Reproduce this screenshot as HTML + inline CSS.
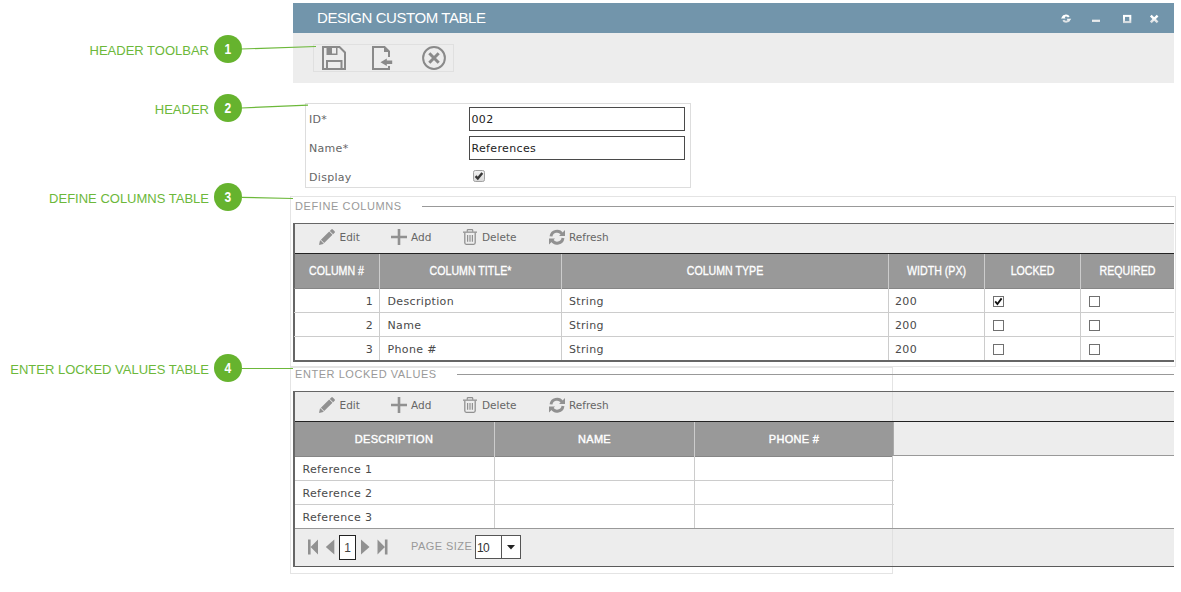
<!DOCTYPE html>
<html><head><meta charset="utf-8"><title>Design Custom Table</title>
<style>
html,body{margin:0;padding:0;background:#fff;}
body{width:1181px;height:592px;position:relative;overflow:hidden;font-family:"Liberation Sans","DejaVu Sans",sans-serif;}
.abs{position:absolute;}
.t{position:absolute;white-space:nowrap;line-height:1;}
/* annotations */
.lbl{color:#6cb83a;font-size:13px;right:972px;text-align:right;}
.dot span{display:inline-block;transform:scaleX(.86);font-size:14px;}
.dot{width:28px;height:28px;border-radius:14px;background:#66b32e;color:#fff;font-weight:bold;font-size:13px;text-align:center;line-height:28px;left:214px;}
/* window */
#title{left:293px;top:3px;width:881px;height:30px;background:#7295ab;}
#tbar{left:293px;top:33px;width:881px;height:50px;background:#ededed;}
#tbox{left:313px;top:44px;width:141px;height:28px;border:1px solid #e0e0e0;box-sizing:border-box;}
.bt{font-family:"DejaVu Sans","Liberation Sans",sans-serif;font-size:11px;letter-spacing:.35px;color:#4a4a4a;margin-top:1px;}
.fl{font-family:"DejaVu Sans","Liberation Sans",sans-serif;font-size:11px;letter-spacing:.3px;color:#666;margin-top:1px;}
.inp{border:1px solid #4a4a4a;box-sizing:border-box;background:#fff;}
.fs{border:1px solid #e4e4e4;box-sizing:border-box;}
.leg{font-size:11px;color:#999;letter-spacing:.6px;}
.hl{height:1px;background:#999;}
.hd{color:#fff;font-weight:normal;font-size:12px;text-align:center;transform:scaleX(.885);-webkit-text-stroke:.32px #fff;}
.hd2{color:#fff;font-weight:normal;font-size:11px;letter-spacing:.3px;text-align:center;-webkit-text-stroke:.4px #fff;margin-top:.75px;}
.cb{width:11px;height:11px;border:1px solid #707070;box-sizing:border-box;background:#fff;}
.tbt{font-family:"DejaVu Sans","Liberation Sans",sans-serif;font-size:10.5px;color:#666;}
.ln{background:#ccc;}
.ic{color:#919191;fill:#919191;}
</style></head><body>

<!-- annotations -->
<div class="t lbl" style="top:43.500px;">HEADER TOOLBAR</div>
<div class="t lbl" style="top:102.500px;">HEADER</div>
<div class="t lbl" style="top:191.500px;">DEFINE COLUMNS TABLE</div>
<div class="t lbl" style="top:362.500px;">ENTER LOCKED VALUES TABLE</div>
<div class="abs dot" style="top:35px;"><span>1</span></div>
<div class="abs dot" style="top:94px;"><span>2</span></div>
<div class="abs dot" style="top:183px;"><span>3</span></div>
<div class="abs dot" style="top:354px;"><span>4</span></div>

<!-- window -->
<div class="abs" id="title"></div>
<div class="t" style="left:317px;top:9.500px;font-size:15px;letter-spacing:-.43px;color:#fff;">DESIGN CUSTOM TABLE</div>
<div class="abs" id="tbar"></div>
<div class="abs" id="tbox"></div>

<!-- title icons -->
<svg class="abs" style="left:1056px;top:10px;" width="110" height="18" viewBox="0 0 110 18">
 <defs><linearGradient id="tg" x1="0" y1="5" x2="0" y2="13" gradientUnits="userSpaceOnUse"><stop offset=".4" stop-color="#fff"/><stop offset="1" stop-color="#d0d6da"/></linearGradient></defs>
 <g fill="none" stroke="url(#tg)" stroke-width="2">
  <path d="M7.200 7.600a3.100 3.100 0 0 1 5.600-.6" />
  <path d="M12.900 9.700a3.100 3.100 0 0 1-5.600 .6" />
 </g>
 <path d="M5 8.600h4.600l-2.300-3.600z M15.200 8.700h-4.600l2.300 3.600z" fill="url(#tg)"/>
 <rect x="36" y="9.700" width="8" height="2.300" fill="url(#tg)"/>
 <rect x="68" y="5.900" width="6.300" height="6.200" fill="none" stroke="url(#tg)" stroke-width="2"/>
 <path d="M94.800 5.600l6.800 6.800M101.600 5.600l-6.800 6.800" stroke="url(#tg)" stroke-width="2.400" fill="none"/>
</svg>

<!-- header toolbar icons -->
<svg class="abs" style="left:322px;top:46px;" width="24" height="24" viewBox="0 0 24 24">
 <path d="M1 1h16.5l5.5 5.5v16.500h-22z" fill="none" stroke="#8a8a8a" stroke-width="2" stroke-linejoin="miter"/>
 <path d="M4.500 1h11v8h-11z" fill="#8a8a8a"/>
 <rect x="10" y="2" width="4" height="5.500" fill="#ededed"/>
 <path d="M5 23v-8h14.500v8" fill="none" stroke="#8a8a8a" stroke-width="2"/>
</svg>
<svg class="abs" style="left:372px;top:46px;" width="22" height="24" viewBox="0 0 22 24">
 <path d="M17 11v-5.500l-4.500-4.500h-11.500v22h16v-3" fill="none" stroke="#8a8a8a" stroke-width="2"/>
 <path d="M12 1v5h5z" fill="#8a8a8a"/>
 <path d="M8.500 16.200l6.300-3.600v1.900h5.400v3.500h-5.400v1.900z" fill="#8a8a8a"/>
</svg>
<svg class="abs" style="left:422px;top:46px;" width="24" height="24" viewBox="0 0 24 24">
 <circle cx="12" cy="12" r="10.900" fill="none" stroke="#8a8a8a" stroke-width="2"/>
 <path d="M7.300 7.300l9.400 9.400M16.700 7.300l-9.400 9.400" stroke="#8a8a8a" stroke-width="3" fill="none"/>
</svg>

<!-- header form -->
<div class="abs" style="left:305px;top:103px;width:386px;height:85px;border:1px solid #ddd;box-sizing:border-box;"></div>
<div class="t fl" style="left:309px;top:113px;">ID*</div>
<div class="t fl" style="left:309px;top:142px;">Name*</div>
<div class="t fl" style="left:309px;top:171px;">Display</div>
<div class="abs inp" style="left:469px;top:107px;width:216px;height:24px;"></div>
<div class="abs inp" style="left:469px;top:136px;width:216px;height:24px;"></div>
<div class="t bt" style="left:471.500px;top:113px;color:#222;">002</div>
<div class="t bt" style="left:471.500px;top:142px;color:#222;">References</div>
<svg class="abs" style="left:473px;top:170px;" width="12" height="12" viewBox="0 0 12 12">
 <defs><linearGradient id="cg" x1="0" y1="0" x2="0" y2="1"><stop offset="0" stop-color="#f4f4f4"/><stop offset="1" stop-color="#d8d8d8"/></linearGradient></defs>
 <rect x=".5" y=".5" width="11" height="11" rx="1.800" fill="url(#cg)" stroke="#a2a2a2"/>
 <path d="M2.600 6.100l2.200 2.400l4.500-5.600" fill="none" stroke="#383838" stroke-width="2.400"/>
</svg>

<!-- fieldset 1 -->
<div class="abs fs" style="left:290px;top:196px;width:886px;height:171px;"></div>
<div class="abs" style="left:293px;top:199px;width:120px;height:15px;background:#fff;"></div>
<div class="t leg" style="left:295px;top:201px;">DEFINE COLUMNS</div>
<div class="abs hl" style="left:422px;top:206px;width:752px;"></div>

<!-- grid 1 -->
<div class="abs" style="left:293px;top:223px;width:881px;height:138px;background:#fff;"></div>
<div class="abs" style="left:293px;top:224px;width:881px;height:29px;background:#ededed;"></div>
<div class="abs" style="left:293px;top:223px;width:881px;height:1px;background:#666;"></div>
<div class="abs" style="left:293px;top:252.500px;width:881px;height:1.500px;background:#222;"></div>
<div class="abs" style="left:293px;top:254px;width:881px;height:34px;background:#999;"></div>
<div class="abs" style="left:293px;top:223px;width:1.500px;height:138px;background:#666;"></div>
<div class="abs" style="left:293px;top:360px;width:881px;height:1.500px;background:#666;"></div>




<!-- grid 1 header cells -->
<div class="abs" style="left:379px;top:254px;width:1px;height:34px;background:#ccc;"></div>
<div class="abs" style="left:561px;top:254px;width:1px;height:34px;background:#ccc;"></div>
<div class="abs" style="left:888px;top:254px;width:1px;height:34px;background:#ccc;"></div>
<div class="abs" style="left:984px;top:254px;width:1px;height:34px;background:#ccc;"></div>
<div class="abs" style="left:1080px;top:254px;width:1px;height:34px;background:#ccc;"></div>
<div class="t hd" style="left:294px;width:85px;top:265px;">COLUMN #</div>
<div class="t hd" style="left:380px;width:181px;top:265px;">COLUMN TITLE*</div>
<div class="t hd" style="left:562px;width:326px;top:265px;">COLUMN TYPE</div>
<div class="t hd" style="left:889px;width:95px;top:265px;">WIDTH (PX)</div>
<div class="t hd" style="left:985px;width:95px;top:265px;">LOCKED</div>
<div class="t hd" style="left:1081px;width:93px;top:265px;">REQUIRED</div>

<!-- grid 1 rows -->
<div class="abs" style="left:294px;top:288px;width:880px;height:1px;background:#868686;"></div>
<div class="abs ln" style="left:294px;top:312px;width:880px;height:1px;"></div>
<div class="abs ln" style="left:294px;top:336px;width:880px;height:1px;"></div>
<div class="abs ln" style="left:379px;top:288px;width:1px;height:72px;"></div>
<div class="abs ln" style="left:561px;top:288px;width:1px;height:72px;"></div>
<div class="abs ln" style="left:888px;top:288px;width:1px;height:72px;"></div>
<div class="abs ln" style="left:984px;top:288px;width:1px;height:72px;"></div>
<div class="abs ln" style="left:1080px;top:288px;width:1px;height:72px;"></div>

<div class="t bt" style="left:294px;width:79px;text-align:right;top:295px;">1</div>
<div class="t bt" style="left:294px;width:79px;text-align:right;top:319px;">2</div>
<div class="t bt" style="left:294px;width:79px;text-align:right;top:343px;">3</div>
<div class="t bt" style="left:387.500px;top:295px;">Description</div>
<div class="t bt" style="left:387.500px;top:319px;">Name</div>
<div class="t bt" style="left:387.500px;top:343px;">Phone #</div>
<div class="t bt" style="left:569px;top:295px;">String</div>
<div class="t bt" style="left:569px;top:319px;">String</div>
<div class="t bt" style="left:569px;top:343px;">String</div>
<div class="t bt" style="left:895px;top:295px;">200</div>
<div class="t bt" style="left:895px;top:319px;">200</div>
<div class="t bt" style="left:895px;top:343px;">200</div>
<div class="abs cb" style="left:993px;top:296px;"></div>
<svg class="abs" style="left:993px;top:296px;" width="11" height="11" viewBox="0 0 11 11"><path d="M2.200 5.400l2.200 2.600l4.200-5.600" fill="none" stroke="#111" stroke-width="1.800"/></svg>
<div class="abs cb" style="left:993px;top:320px;"></div>
<div class="abs cb" style="left:993px;top:344px;"></div>
<div class="abs cb" style="left:1089px;top:296px;"></div>
<div class="abs cb" style="left:1089px;top:320px;"></div>
<div class="abs cb" style="left:1089px;top:344px;"></div>


<svg width="0" height="0" style="position:absolute">
 <defs>
  <symbol id="i-pencil" viewBox="0 0 16 16">
   <path d="M0 16l.9-4.200l.5-.5l3.300 3.300l-.5.500z M1.900 10.800l8.300-8.300l3.300 3.300l-8.300 8.300z M10.800 1.900l1.500-1.500a1.100 1.100 0 0 1 1.500 0l1.800 1.800a1.100 1.100 0 0 1 0 1.500l-1.500 1.500z"/>
  </symbol>
  <symbol id="i-plus" viewBox="0 0 16 16">
   <path d="M0 6.700h6.700v-6.700h2.600v6.700h6.700v2.600h-6.700v6.700h-2.600v-6.700h-6.700z"/>
  </symbol>
  <symbol id="i-trash" viewBox="0 0 14 16">
   <path d="M0 2.500h14v1.300h-14z"/>
   <path d="M4.300 2.800v-1.500q0-.7.700-.7h4q.7 0 .7.700v1.500" fill="none" stroke="currentColor" stroke-width="1.200"/>
   <path d="M1.800 3.500v10.300q0 1.500 1.500 1.500h7.400q1.500 0 1.500-1.500v-10.300" fill="none" stroke="currentColor" stroke-width="1.300"/>
   <path d="M4.600 6v6.800M7 6v6.800M9.400 6v6.800" fill="none" stroke="currentColor" stroke-width="1.200"/>
  </symbol>
  <symbol id="i-refresh" viewBox="0 0 16 16">
   <path d="M2 7.400a6 6 0 0 1 11-2.400" fill="none" stroke="currentColor" stroke-width="2.900"/>
   <path d="M14 9a6 6 0 0 1-11 2.400" fill="none" stroke="currentColor" stroke-width="2.900"/>
   <path d="M16 1v6h-6z M0 15.400v-6h6z"/>
  </symbol>
 </defs>
</svg>
<!-- grid 1 toolbar -->
<svg class="abs ic" style="left:319px;top:229px;" width="16" height="16"><use href="#i-pencil"/></svg>
<div class="t tbt" style="left:339.500px;top:232px;">Edit</div>
<svg class="abs ic" style="left:391px;top:229px;" width="16" height="16"><use href="#i-plus"/></svg>
<div class="t tbt" style="left:411px;top:232px;">Add</div>
<svg class="abs ic" style="left:463px;top:229px;" width="14" height="16"><use href="#i-trash"/></svg>
<div class="t tbt" style="left:482px;top:232px;">Delete</div>
<svg class="abs ic" style="left:549px;top:229px;" width="16" height="16"><use href="#i-refresh"/></svg>
<div class="t tbt" style="left:569px;top:232px;">Refresh</div>

<!-- fieldset 2 -->
<div class="abs fs" style="left:290px;top:367px;width:603px;height:207px;"></div>
<div class="abs" style="left:293px;top:368px;width:160px;height:14px;background:#fff;"></div>
<div class="t leg" style="left:295px;top:369px;letter-spacing:.55px;">ENTER LOCKED VALUES</div>
<div class="abs hl" style="left:457px;top:374px;width:717px;"></div>

<!-- grid 2 -->
<div class="abs" style="left:293px;top:392px;width:881px;height:30px;background:#ededed;"></div>
<div class="abs" style="left:293px;top:391px;width:881px;height:1px;background:#666;"></div>
<div class="abs" style="left:293px;top:421px;width:881px;height:1.500px;background:#222;"></div>
<div class="abs" style="left:293px;top:422px;width:600px;height:34px;background:#999;"></div>
<div class="abs" style="left:893px;top:422px;width:281px;height:34px;background:#ededed;border-left:1px solid #aaa;border-bottom:1px solid #999;box-sizing:border-box;"></div>
<div class="abs" style="left:494px;top:422px;width:1px;height:34px;background:#ccc;"></div>
<div class="abs" style="left:694px;top:422px;width:1px;height:34px;background:#ccc;"></div>
<div class="t hd2" style="left:294px;width:200px;top:433px;">DESCRIPTION</div>
<div class="t hd2" style="left:495px;width:199px;top:433px;">NAME</div>
<div class="t hd2" style="left:695px;width:198px;top:433px;">PHONE #</div>
<div class="abs" style="left:294px;top:456px;width:599px;height:1px;background:#868686;"></div>
<div class="abs ln" style="left:294px;top:480px;width:600px;height:1px;"></div>
<div class="abs ln" style="left:294px;top:504px;width:600px;height:1px;"></div>
<div class="abs ln" style="left:494px;top:456px;width:1px;height:72px;"></div>
<div class="abs ln" style="left:694px;top:456px;width:1px;height:72px;"></div>
<div class="abs ln" style="left:892px;top:456px;width:1px;height:72px;"></div>
<div class="t bt" style="left:302.500px;top:463px;">Reference 1</div>
<div class="t bt" style="left:302.500px;top:487px;">Reference 2</div>
<div class="t bt" style="left:302.500px;top:511px;">Reference 3</div>
<!-- pager -->
<div class="abs" style="left:293px;top:528px;width:881px;height:38px;background:#ededed;border-top:1.500px solid #999;box-sizing:border-box;"></div>
<div class="abs" style="left:293px;top:566px;width:881px;height:1px;background:#5a5a5a;"></div>
<div class="abs" style="left:293px;top:391px;width:1.500px;height:176px;background:#666;"></div>
<svg class="abs ic" style="left:307px;top:539px;" width="82" height="16" viewBox="0 0 82 16">
 <path d="M1 .5h2.600v15h-2.600z M11 .5v15l-7.400-7.500z"/>
 <path d="M27.300 .5v15l-8.500-7.500z"/>
 <path d="M54 .5v15l8.500-7.500z"/>
 <path d="M70.500 .5v15l7.400-7.500z M77.900 .5h2.600v15h-2.600z"/>
</svg>
<div class="abs" style="left:339px;top:535px;width:17px;height:25px;border:1px solid #222;background:#fff;box-sizing:border-box;"></div>
<div class="t" style="left:339px;width:17px;text-align:center;top:541.500px;color:#444;font-size:12px;">1</div>
<div class="t" style="left:411px;top:541px;font-size:11px;letter-spacing:.45px;color:#999;">PAGE SIZE</div>
<div class="abs" style="left:475px;top:535px;width:46px;height:24px;border:1px solid #555;background:#fff;box-sizing:border-box;"></div>
<div class="abs" style="left:501px;top:535px;width:1px;height:24px;background:#555;"></div>
<div class="t" style="left:477px;top:541.500px;color:#333;font-size:12px;letter-spacing:-.6px;">10</div>
<svg class="abs" style="left:507px;top:545px;" width="8" height="5" viewBox="0 0 8 5"><path d="M0 0h8l-4 4.500z" fill="#222"/></svg>
<div class="abs" style="left:892px;top:392px;width:1px;height:29px;background:#e0e0e0;"></div>
<div class="abs" style="left:892px;top:529px;width:1px;height:37px;background:#e0e0e0;"></div>
<!-- grid 2 toolbar -->

<svg class="abs ic" style="left:319px;top:397px;" width="16" height="16"><use href="#i-pencil"/></svg>
<div class="t tbt" style="left:339.500px;top:400px;">Edit</div>
<svg class="abs ic" style="left:391px;top:397px;" width="16" height="16"><use href="#i-plus"/></svg>
<div class="t tbt" style="left:411px;top:400px;">Add</div>
<svg class="abs ic" style="left:463px;top:397px;" width="14" height="16"><use href="#i-trash"/></svg>
<div class="t tbt" style="left:482px;top:400px;">Delete</div>
<svg class="abs ic" style="left:549px;top:397px;" width="16" height="16"><use href="#i-refresh"/></svg>
<div class="t tbt" style="left:569px;top:400px;">Refresh</div>

<!-- annotation lines -->
<svg class="abs" style="left:0;top:0;" width="1181" height="592">
 <g stroke="#6cb83a" stroke-width="1.200" fill="none">
  <line x1="241" y1="49" x2="316" y2="46.500"/>
  <line x1="241" y1="108" x2="308" y2="105.200"/>
  <line x1="241" y1="197.400" x2="293" y2="198.500"/>
  <line x1="241" y1="368.500" x2="293" y2="368.500"/>
 </g>
</svg>
</body></html>
